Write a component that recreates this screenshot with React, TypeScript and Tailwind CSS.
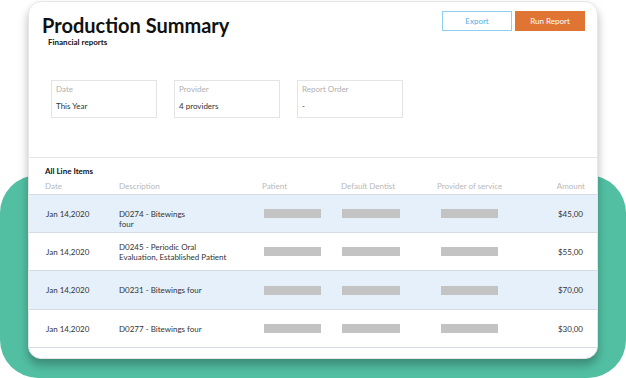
import React from "react";

const rows = [
  { date: "Jan 14,2020", desc: ["D0274 - Bitewings", "four"], amount: "$45,00", blue: true, descOffset: true, h: "h-[38px]" },
  { date: "Jan 14,2020", desc: ["D0245 - Periodic Oral", "Evaluation, Established Patient"], amount: "$55,00", blue: false, descOffset: false, h: "h-[38px]" },
  { date: "Jan 14,2020", desc: ["D0231 - Bitewings four"], amount: "$70,00", blue: true, descOffset: false, h: "h-[39px]" },
  { date: "Jan 14,2020", desc: ["D0277 - Bitewings four"], amount: "$30,00", blue: false, descOffset: false, h: "h-[39px]" },
];

function Filter({ label, value }: { label: string; value: string }) {
  return (
    <div className="w-[106px] h-[38px] border border-[#e4e4e4] px-[4px] pt-[3px] flex flex-col">
      <div className="text-[8px] leading-[10px] text-[#b0b0b0]">{label}</div>
      <div className="text-[8px] leading-[10px] text-[#333] mt-[7px]">{value}</div>
    </div>
  );
}

export default function App() {
  return (
    <div
      className="relative w-[626px] h-[378px] bg-white overflow-hidden"
      style={{ fontFamily: "Lato, 'Noto Sans', sans-serif" }}
    >
      <div className="absolute left-0 top-[175px] w-[626px] h-[203px] rounded-[38px] bg-[#52bfa3]" />
      <div className="relative ml-[28px] mt-[1px] w-[570px] h-[358px] bg-white rounded-[13px] border border-[#e6e6e6] shadow-[0_6px_10px_rgba(0,0,0,0.28)] overflow-hidden flex flex-col">
        <div className="flex justify-between items-start pl-[13px] pr-[12px]">
          <div className="pt-[11px]">
            <div className="text-[20px] leading-[24px] font-bold text-[#111]">Production Summary</div>
            <div className="text-[8px] leading-[10px] font-bold text-[#111] ml-[6px] mt-[0px]">Financial reports</div>
          </div>
          <div className="flex gap-[3px] pt-[9px]">
            <div className="w-[70px] h-[20px] border border-[#8fd0f2] text-[#4fb0ea] text-[8px] flex items-center justify-center">Export</div>
            <div className="w-[70px] h-[20px] bg-[#e07432] text-white text-[8px] flex items-center justify-center">Run Report</div>
          </div>
        </div>
        <div className="flex gap-[17px] pl-[22px] mt-[33px]">
          <Filter label="Date" value="This Year" />
          <Filter label="Provider" value="4 providers" />
          <Filter label="Report Order" value="-" />
        </div>
        <div className="mt-[39px] border-t border-[#e6e6e6]" />
        <div className="pl-[16px] pt-[8px] text-[8px] leading-[10px] font-bold text-[#111]">All Line Items</div>
        <div className="flex h-[18px] pt-[5px] leading-[10px] pl-[16px] pr-[12px] text-[8px] text-[#b8b8b8]">
          <div className="w-[74px]">Date</div>
          <div className="w-[143px]">Description</div>
          <div className="w-[79px]">Patient</div>
          <div className="w-[96px]">Default Dentist</div>
          <div className="flex-1">Provider of service</div>
          <div>Amount</div>
        </div>
        {rows.map((r, i) => (
          <div
            key={i}
            className={`flex items-center ${r.h} shrink-0 border-t border-[#d6dce3] pl-[17px] pr-[14px] text-[8px] text-[#333] ${r.blue ? "bg-[#e6f0fa]" : "bg-white"} ${i === 3 ? "border-b" : ""}`}
          >
            <div className="w-[73px]">{r.date}</div>
            <div className={`w-[143px] leading-[10px] ${r.descOffset ? "mt-[10px]" : ""}`}>
              {r.desc.map((d, j) => (
                <div key={j}>{d}</div>
              ))}
            </div>
            <div className="w-[79px] pl-[2px]">
              <div className="w-[57px] h-[9px] bg-[#c3c3c3]" />
            </div>
            <div className="w-[96px] pl-[1px]">
              <div className="w-[58px] h-[9px] bg-[#c3c3c3]" />
            </div>
            <div className="flex-1 pl-[4px]">
              <div className="w-[57px] h-[9px] bg-[#c3c3c3]" />
            </div>
            <div>{r.amount}</div>
          </div>
        ))}
      </div>
    </div>
  );
}
